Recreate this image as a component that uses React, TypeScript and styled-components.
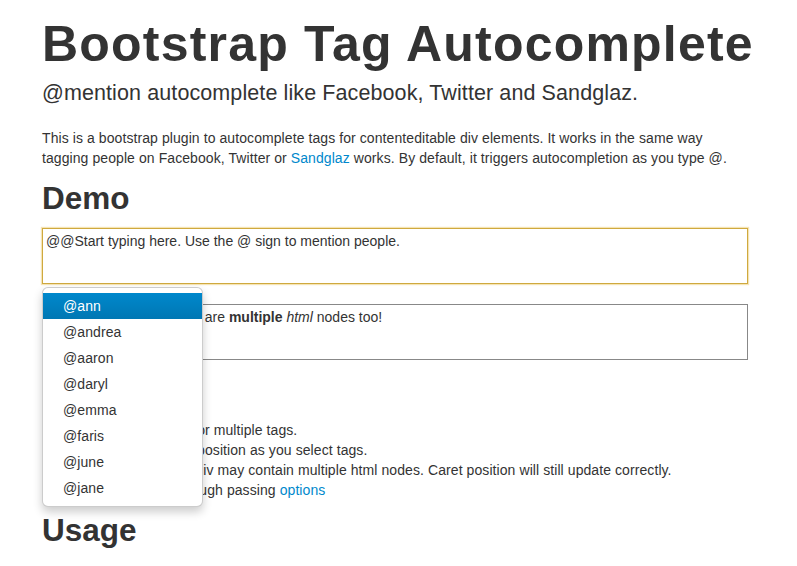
import React from 'react';
import styled, { createGlobalStyle } from 'styled-components';

const GlobalStyle = createGlobalStyle`
  body {
    margin: 0;
    background: #fff;
    color: #333;
    font-family: "Liberation Sans", Arial, sans-serif;
    font-size: 14px;
    line-height: 20px;
    letter-spacing: 0.08px;
  }
`;

const users = ['ann', 'andrea', 'aaron', 'daryl', 'emma', 'faris', 'june', 'jane'];

const features = [
  'Has built-in support for multiple tags.',
  'Keeps track of caret position as you select tags.',
  'Any contenteditable div may contain multiple html nodes. Caret position will still update correctly.',
];

const App: React.FC = () => {
  return (
    <>
      <GlobalStyle />
      <StyledPage>
        <StyledTitle>Bootstrap Tag Autocomplete</StyledTitle>
        <StyledLead>@mention autocomplete like Facebook, Twitter and Sandglaz.</StyledLead>
        <StyledParagraph>
          This is a bootstrap plugin to autocomplete tags for contenteditable div elements. It works in
          the same way tagging people on Facebook, Twitter or <StyledLink href="#">Sandglaz</StyledLink>{' '}
          works. By default, it triggers autocompletion as you type @.
        </StyledParagraph>

        <StyledHeading>Demo</StyledHeading>
        <StyledEditorWrap>
          <StyledEditor focused>@@Start typing here. Use the @ sign to mention people.</StyledEditor>
          <StyledMenu>
            {users.map((name, i) => (
              <StyledMenuItem key={name} active={i === 0}>
                @{name}
              </StyledMenuItem>
            ))}
          </StyledMenu>
        </StyledEditorWrap>
        <StyledEditor>
          Test it here as well, there are <b>multiple</b> <i>html</i> nodes too!
        </StyledEditor>

        <StyledHeading>Features</StyledHeading>
        <StyledList>
          {features.map((f) => (
            <li key={f}>{f}</li>
          ))}
          <li>
            Customizable UI through passing <StyledLink href="#">options</StyledLink>
          </li>
        </StyledList>

        <StyledHeading>Usage</StyledHeading>
      </StyledPage>
    </>
  );
};

const StyledPage = styled.div`
  width: 706px;
  padding: 0 0 40px 42px;
`;

const StyledTitle = styled.h1`
  margin: 0;
  padding-top: 14px;
  font-size: 50px;
  line-height: 60px;
  letter-spacing: 1.2px;
  font-weight: bold;
  white-space: nowrap;
  color: #333;
`;

const StyledLead = styled.p`
  margin: 4px 0 0;
  font-size: 21.5px;
  line-height: 30px;
  letter-spacing: 0.1px;
  font-weight: 300;
`;

const StyledParagraph = styled.p`
  margin: 20px 0 10px;
`;

const StyledLink = styled.a`
  color: #0088cc;
  text-decoration: none;
`;

const StyledHeading = styled.h2`
  margin: 10px 0;
  font-size: 31.5px;
  line-height: 40px;
  letter-spacing: 0;
  font-weight: bold;
  color: #333;
`;

const StyledEditorWrap = styled.div`
  position: relative;
  margin-bottom: 20px;
`;

const StyledEditor = styled.div<{ focused?: boolean }>`
  box-sizing: border-box;
  height: 56px;
  padding: 2px 3px;
  letter-spacing: 0;
  border: 1px solid ${(p) => (p.focused ? '#cfa93f' : '#888')};
  box-shadow: ${(p) => (p.focused ? '0 0 1px 1px rgba(236, 205, 120, 0.55)' : 'none')};
`;

const StyledMenu = styled.ul`
  position: absolute;
  top: calc(100% + 3px);
  left: 0;
  z-index: 10;
  width: 161px;
  box-sizing: border-box;
  margin: 0;
  padding: 5px 0;
  list-style: none;
  background: #fff;
  border: 1px solid rgba(0, 0, 0, 0.2);
  border-radius: 6px;
  box-shadow: 0 5px 10px rgba(0, 0, 0, 0.2);
`;

const StyledMenuItem = styled.li<{ active?: boolean }>`
  padding: 3px 20px;
  line-height: 20px;
  color: ${(p) => (p.active ? '#fff' : '#333')};
  background: ${(p) => (p.active ? 'linear-gradient(#0088cc, #0077b3)' : 'transparent')};
`;

const StyledList = styled.ul`
  margin: 0 0 10px 25px;
  padding: 0;
`;

export default App;
